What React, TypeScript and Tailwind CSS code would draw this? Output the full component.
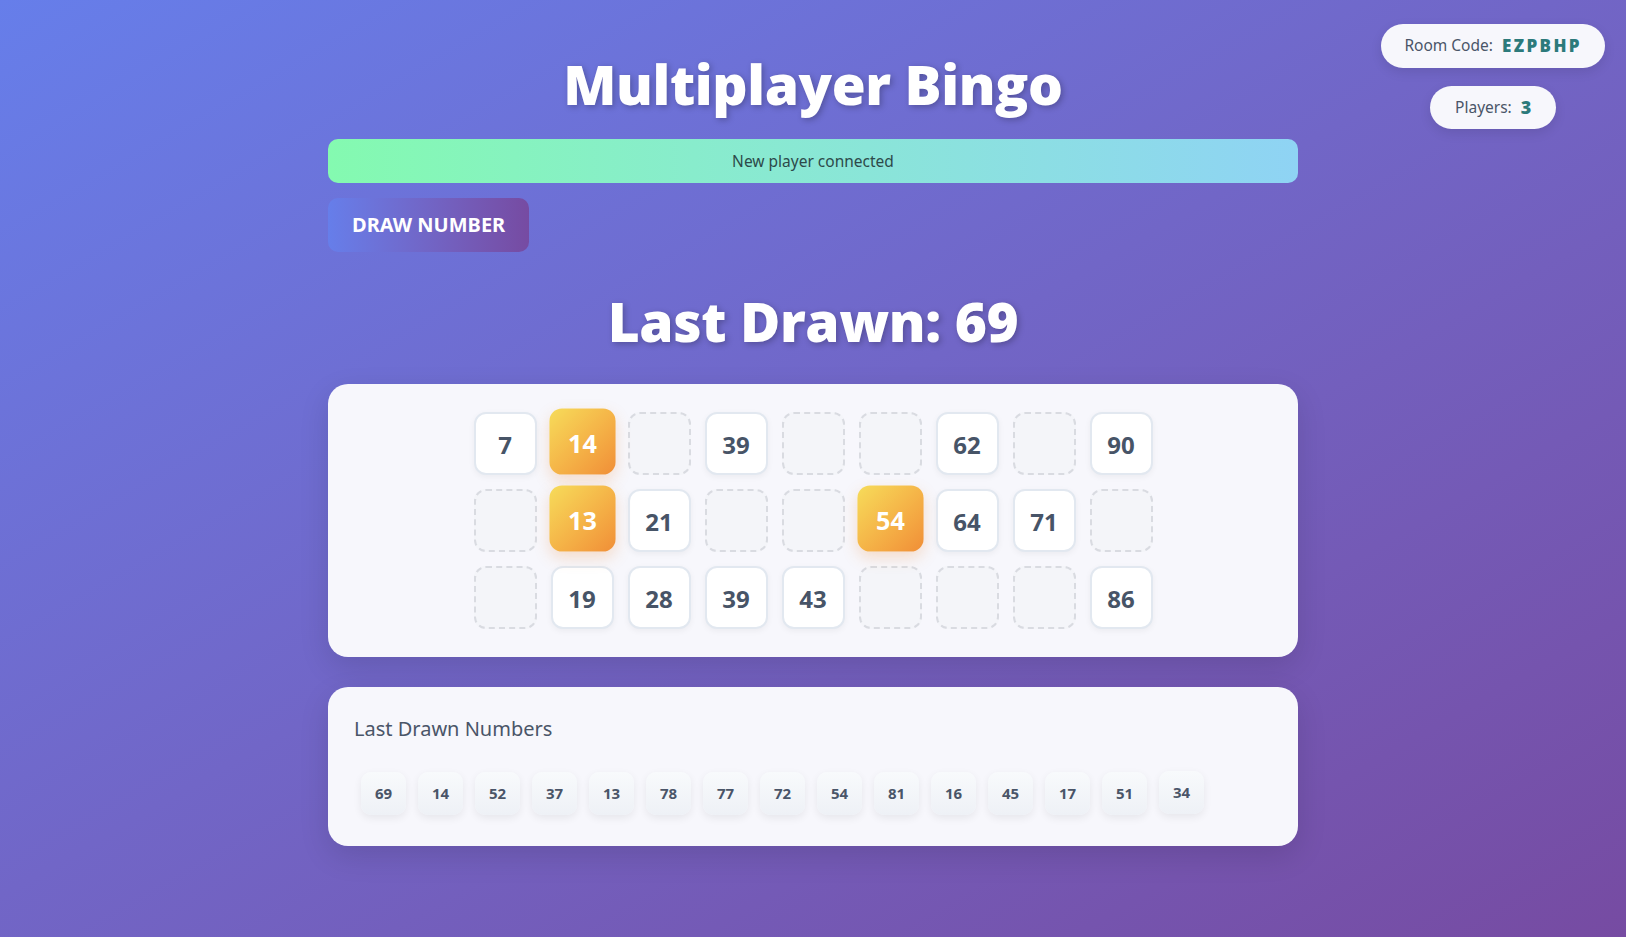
const card = [
  [7, 14, null, 39, null, null, 62, null, 90],
  [null, 13, 21, null, null, 54, 64, 71, null],
  [null, 19, 28, 39, 43, null, null, null, 86],
];

const marked = [14, 13, 54];

const history = [69, 14, 52, 37, 13, 78, 77, 72, 54, 81, 16, 45, 17, 51, 34];

const Cell = ({ value }: { value: number | null }) => {
  if (value === null) {
    return (
      <div className="w-[63px] h-[63px] rounded-[12px] border-2 border-dashed border-[#d9dbe1] bg-[#f4f5f9]" />
    );
  }
  if (marked.includes(value)) {
    return (
      <div className="w-[63px] h-[63px] rounded-[12px] flex items-center justify-center pt-[2px] text-[24px] font-bold text-white bg-gradient-to-br from-[#f6dc5a] to-[#f08e37] scale-105 -translate-y-[2px] shadow-[0_6px_14px_rgba(240,140,55,0.25)]">
        {value}
      </div>
    );
  }
  return (
    <div className="w-[63px] h-[63px] rounded-[12px] flex items-center justify-center pt-[3px] text-[24px] font-bold text-[#475467] bg-white border-2 border-[#e2e8f0] shadow-[0_2px_6px_rgba(0,0,0,0.05)]">
      {value}
    </div>
  );
};

export default function App() {
  return (
    <div className="min-h-[937px] w-full bg-gradient-to-br from-[#667eea] to-[#764ba2] font-['Noto_Sans',sans-serif] relative">
      <div className="absolute top-[24px] right-[21px] flex flex-col items-center gap-[18px]">
        <div className="h-[44px] px-[23px] rounded-full bg-[#f7f7fc] flex items-center gap-[9px] shadow-[0_4px_12px_rgba(0,0,0,0.1)]">
          <span className="text-[15.5px] text-[#4a5568]">Room Code:</span>
          <span className="font-['Open_Sans',sans-serif] text-[17px] font-extrabold tracking-[2.4px] text-[#2c7a7b]">EZPBHP</span>
        </div>
        <div className="h-[43px] px-[25px] rounded-full bg-[#f7f7fc] flex items-center gap-[9px] shadow-[0_4px_12px_rgba(0,0,0,0.1)]">
          <span className="text-[15.5px] text-[#4a5568]">Players:</span>
          <span className="font-['Open_Sans',sans-serif] text-[18px] font-extrabold text-[#2c7a7b]">3</span>
        </div>
      </div>

      <div className="w-[970px] mx-auto pt-[50px]">
        <h1 className="text-center text-white font-['Open_Sans',sans-serif] text-[55px] leading-[67px] font-extrabold tracking-[-0.4px] [text-shadow:2px_2px_6px_rgba(0,0,0,0.25)]">
          Multiplayer Bingo
        </h1>

        <div className="mt-[22px] h-[44px] rounded-[10px] bg-gradient-to-r from-[#84fab0] to-[#8fd3f4] flex items-center justify-center pt-[1px] text-[15.5px] text-[#2d4a4a]">
          New player connected
        </div>

        <button className="mt-[15px] h-[54px] px-[24px] rounded-[10px] bg-gradient-to-r from-[#667eea] to-[#764ba2] text-white text-[20px] font-bold uppercase">
          Draw Number
        </button>

        <h2 className="mt-[35px] text-center text-white font-['Open_Sans',sans-serif] text-[55px] leading-[67px] font-extrabold tracking-[-0.4px] [text-shadow:2px_2px_6px_rgba(0,0,0,0.25)]">
          Last Drawn: 69
        </h2>

        <div className="mt-[30px] rounded-[20px] bg-[#f7f7fc] pt-[28px] pb-[28px] shadow-[0_10px_30px_rgba(0,0,0,0.12)] flex justify-center">
          <div className="grid grid-cols-9 gap-[14px]">
            {card.flat().map((v, i) => (
              <Cell key={i} value={v} />
            ))}
          </div>
        </div>

        <div className="mt-[30px] rounded-[20px] bg-[#f7f7fc] pt-[27px] pb-[31px] px-[26px] shadow-[0_10px_30px_rgba(0,0,0,0.12)]">
          <div className="text-[20px] leading-[30px] text-[#4a5568]">Last Drawn Numbers</div>
          <div className="mt-[28px] pl-[7px] flex gap-[12px]">
            {history.map((n, i) => (
              <div
                key={i}
                className={`w-[45px] h-[43px] rounded-[10px] flex items-center justify-center text-[15px] font-bold text-[#4a5568] bg-gradient-to-b from-[#f8fafc] to-[#eef1f6] shadow-[0_3px_8px_rgba(0,0,0,0.07)] ${i === history.length - 1 ? "-translate-y-[1px]" : ""}`}
              >
                {n}
              </div>
            ))}
          </div>
        </div>
      </div>
    </div>
  );
}
